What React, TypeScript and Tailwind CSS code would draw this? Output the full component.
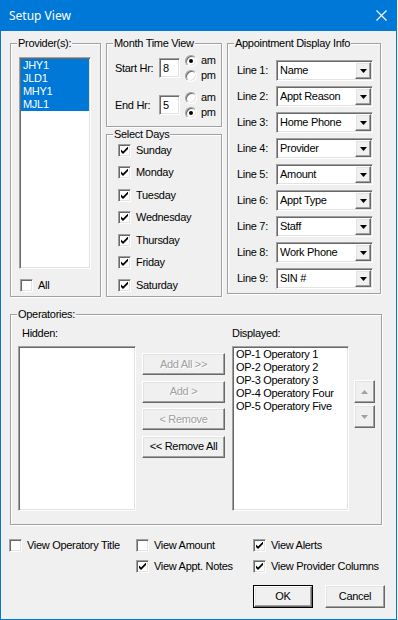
import React from "react";

const sunken =
  "border border-t-[#a0a0a0] border-l-[#a0a0a0] border-b-white border-r-white shadow-[inset_1px_1px_0_#696969,inset_-1px_-1px_0_#e3e3e3] bg-white";
const raised =
  "border border-t-white border-l-white border-b-[#696969] border-r-[#696969] shadow-[inset_-1px_-1px_0_#a0a0a0,inset_1px_1px_0_#e3e3e3] bg-[#f0f0f0]";
const etched =
  "border border-[#a0a0a0] shadow-[inset_1px_1px_0_#fff,1px_1px_0_#fff] m-0 p-0 min-w-0";
const legend = "ml-[6px] px-[1px] bg-[#f0f0f0] leading-[13px]";
const disabledText = "text-[#a0a0a0] [text-shadow:1px_1px_0_#fff]";

function Check({ on }: { on?: boolean }) {
  return (
    <span className={`${sunken} flex w-[13px] h-[13px] shrink-0 items-center justify-center`}>
      {on && (
        <svg width="7" height="7" viewBox="0 0 7 7">
          <path d="M0 2.5 L2 4.5 L7 -0.5 L7 2 L2 7 L0 5 Z" fill="#000" />
        </svg>
      )}
    </span>
  );
}

function CheckRow({ label, on }: { label: string; on?: boolean }) {
  return (
    <div className="flex h-[13px] items-center">
      <Check on={on} />
      <span className="ml-[5px] leading-[13px] whitespace-nowrap">{label}</span>
    </div>
  );
}

function Radio({ label, on }: { label: string; on?: boolean }) {
  return (
    <div className="flex h-[15px] items-center">
      <span className="flex w-[12px] h-[12px] shrink-0 items-center justify-center rounded-full border border-t-[#a0a0a0] border-l-[#a0a0a0] border-b-white border-r-white bg-white shadow-[inset_1px_1px_0_#696969,inset_-1px_-1px_0_#e3e3e3]">
        {on && <span className="w-[4px] h-[4px] rounded-full bg-black" />}
      </span>
      <span className="ml-[4px] leading-[13px]">{label}</span>
    </div>
  );
}

function Combo({ value }: { value: string }) {
  return (
    <div className={`${sunken} flex w-[97px] h-[21px] p-[1px]`}>
      <span className="flex-1 pl-[2px] leading-[17px] whitespace-nowrap overflow-hidden">{value}</span>
      <span className={`${raised} flex w-[16px] h-[17px] items-center justify-center`}>
        <svg width="7" height="4" viewBox="0 0 7 4">
          <path d="M0 0h7L3.5 4z" fill="#000" />
        </svg>
      </span>
    </div>
  );
}

function Btn({ label, disabled, w }: { label: string; disabled?: boolean; w: string }) {
  return (
    <div className={`${raised} ${w} h-[22px] flex items-center justify-center whitespace-nowrap ${disabled ? disabledText : ""}`}>
      {label}
    </div>
  );
}

const lines = [
  "Name",
  "Appt Reason",
  "Home Phone",
  "Provider",
  "Amount",
  "Appt Type",
  "Staff",
  "Work Phone",
  "SIN #",
];
const days = ["Sunday", "Monday", "Tuesday", "Wednesday", "Thursday", "Friday", "Saturday"];
const ops = ["OP-1 Operatory 1", "OP-2 Operatory 2", "OP-3 Operatory 3", "OP-4 Operatory Four", "OP-5 Operatory Five"];

export default function App() {
  return (
    <div className="w-[398px] h-[620px] bg-[#f4f4f4] overflow-hidden font-['Liberation_Sans',Arial,sans-serif] text-[11px] tracking-[-0.3px] text-black">
      <div className="flex flex-col w-[397px] h-[620px] border-x border-b border-[#0078d7]">
        {/* Title bar */}
        <div className="flex h-[31px] shrink-0 items-center justify-between bg-[#0078d7] pl-[8px] pr-[9px] text-white">
          <span className="font-['Noto_Sans',sans-serif] text-[12px] tracking-normal">Setup View</span>
          <svg width="11" height="11" viewBox="0 0 11 11">
            <path d="M0.5 0.5 L10.5 10.5 M10.5 0.5 L0.5 10.5" stroke="#fff" strokeWidth="1.1" />
          </svg>
        </div>

        {/* Body */}
        <div className="flex-1 bg-[#f0f0f0]">
          <div className="flex items-start pl-[9px] pt-[6px]">
            {/* Providers */}
            <fieldset className={`${etched} w-[91px] h-[260px]`}>
              <legend className={legend}>Provider(s):</legend>
              <div className="pl-[8px] pt-[7px]">
                <div className={`${sunken} w-[72px] h-[212px] p-[1px]`}>
                  {["JHY1", "JLD1", "MHY1", "MJL1"].map((p) => (
                    <div key={p} className="h-[13px] leading-[13px] bg-[#0078d7] pl-[2px] text-white">
                      {p}
                    </div>
                  ))}
                </div>
                <div className="mt-[10px] ml-[1px]">
                  <CheckRow label="All" />
                </div>
              </div>
            </fieldset>

            {/* Month time view + days */}
            <div className="ml-[5px] flex flex-col">
              <fieldset className={`${etched} w-[116px] h-[90px]`}>
                <legend className={legend}>Month Time View</legend>
                <div className="flex h-[30px] items-center pl-[8px] mt-[3px]">
                  <span className="w-[44px]">Start Hr:</span>
                  <span className={`${sunken} w-[21px] h-[20px] pl-[3px] leading-[18px]`}>8</span>
                  <div className="ml-[5px] flex flex-col">
                    <Radio label="am" on />
                    <Radio label="pm" />
                  </div>
                </div>
                <div className="flex h-[30px] items-center pl-[8px] mt-[7px]">
                  <span className="w-[44px]">End Hr:</span>
                  <span className={`${sunken} w-[21px] h-[20px] pl-[3px] leading-[18px]`}>5</span>
                  <div className="ml-[5px] flex flex-col">
                    <Radio label="am" />
                    <Radio label="pm" on />
                  </div>
                </div>
              </fieldset>
              <fieldset className={`${etched} mt-[1px] w-[116px] h-[169px]`}>
                <legend className={legend}>Select Days</legend>
                <div className="flex flex-col gap-[9.6px] pl-[11px] mt-[2.5px]">
                  {days.map((d) => (
                    <CheckRow key={d} label={d} on />
                  ))}
                </div>
              </fieldset>
            </div>

            {/* Appointment display info */}
            <fieldset className={`${etched} ml-[5px] w-[154px] h-[257px]`}>
              <legend className={legend}>Appointment Display Info</legend>
              <div className="flex flex-col gap-[5px] pl-[9px] mt-[10px]">
                {lines.map((l, i) => (
                  <div key={i} className="flex h-[21px] items-center">
                    <span className="w-[39px]">Line {i + 1}:</span>
                    <Combo value={l} />
                  </div>
                ))}
              </div>
            </fieldset>
          </div>

          {/* Operatories */}
          <div className="pl-[9px] mt-[11px]">
            <fieldset className={`${etched} w-[372px] h-[217px]`}>
              <legend className={legend}>Operatories:</legend>
              <div className="flex items-start pl-[7px] mt-[6px]">
                <div className="flex flex-col w-[118px]">
                  <span className="h-[13px] leading-[13px] pl-[4px]">Hidden:</span>
                  <div className={`${sunken} mt-[6px] h-[165px]`} />
                </div>
                <div className="ml-[6px] flex flex-col gap-[5.5px] pt-[26px]">
                  <Btn w="w-[83px]" label="Add All >>" disabled />
                  <Btn w="w-[83px]" label="Add >" disabled />
                  <Btn w="w-[83px]" label="< Remove" disabled />
                  <Btn w="w-[83px]" label="<< Remove All" />
                </div>
                <div className="ml-[7px] flex flex-col w-[117px]">
                  <span className="h-[13px] leading-[13px]">Displayed:</span>
                  <div className={`${sunken} mt-[6px] h-[165px] p-[1px] pt-[1px]`}>
                    {ops.map((o) => (
                      <div key={o} className="h-[13px] leading-[13px] pl-[2px] whitespace-nowrap">
                        {o}
                      </div>
                    ))}
                  </div>
                </div>
                <div className="ml-[5px] flex flex-col gap-[2px] pt-[53px]">
                  <div className={`${raised} flex w-[21px] h-[23px] items-center justify-center`}>
                    <svg width="7" height="4" viewBox="0 0 7 4">
                      <path d="M0 4h7L3.5 0z" fill="#a0a0a0" />
                    </svg>
                  </div>
                  <div className={`${raised} flex w-[21px] h-[23px] items-center justify-center`}>
                    <svg width="7" height="4" viewBox="0 0 7 4">
                      <path d="M0 0h7L3.5 4z" fill="#a0a0a0" />
                    </svg>
                  </div>
                </div>
              </div>
            </fieldset>
          </div>

          {/* Bottom options */}
          <div className="grid grid-cols-[127px_117px_1fr] gap-y-[8px] pl-[8px] mt-[14px]">
            <CheckRow label="View Operatory Title" />
            <CheckRow label="View Amount" />
            <CheckRow label="View Alerts" on />
            <div />
            <CheckRow label="View Appt. Notes" on />
            <CheckRow label="View Provider Columns" on />
          </div>

          <div className="flex justify-end gap-[12px] pr-[11px] mt-[12px]">
            <div className="w-[60px] h-[23px] border border-black">
              <div className={`${raised} w-full h-full flex items-center justify-center`}>OK</div>
            </div>
            <div className={`${raised} w-[60px] h-[23px] flex items-center justify-center`}>Cancel</div>
          </div>
        </div>
      </div>
    </div>
  );
}
